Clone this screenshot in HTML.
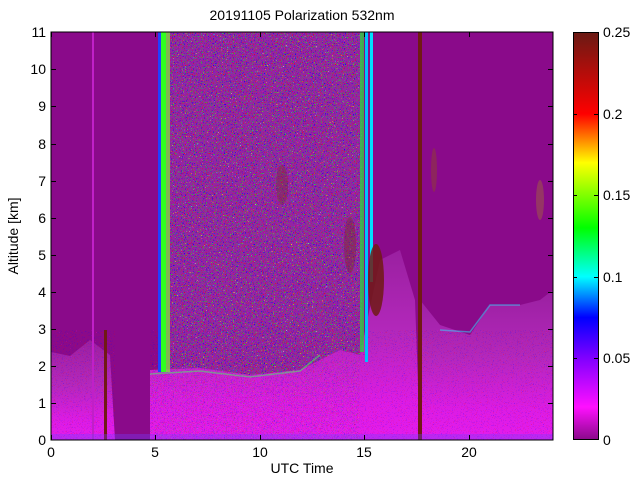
<!DOCTYPE html>
<html><head><style>
html,body{margin:0;padding:0;background:#fff;}
svg{display:block;font-family:"Liberation Sans",sans-serif;}
</style></head><body>
<svg width="640" height="480" viewBox="0 0 640 480" xmlns="http://www.w3.org/2000/svg">
<defs>
<filter id="nz" x="0" y="0" width="100%" height="100%">
<feTurbulence type="fractalNoise" baseFrequency="0.9" numOctaves="1" seed="3"/>
<feComponentTransfer>
<feFuncR type="discrete" tableValues="0 0 1"/>
<feFuncG type="discrete" tableValues="0 0 1"/>
<feFuncB type="discrete" tableValues="0 0 1"/>
<feFuncA type="linear" slope="0" intercept="1"/>
</feComponentTransfer>
<feColorMatrix type="matrix" values="1 0 0 0 0  0 1 0 0 0  0 0 1 0 0  1 1 1 0 0"/>
</filter>
<filter id="nz2" x="0" y="0" width="100%" height="100%">
<feTurbulence type="fractalNoise" baseFrequency="0.9" numOctaves="1" seed="9"/>
<feComponentTransfer>
<feFuncR type="discrete" tableValues="0 0 1"/>
<feFuncG type="discrete" tableValues="0 0 0 0"/>
<feFuncB type="discrete" tableValues="0 0 1"/>
<feFuncA type="linear" slope="0" intercept="1"/>
</feComponentTransfer>
<feColorMatrix type="matrix" values="1 0 0 0 0  0 0 0 0 0  0 0 1 0 0  0.5 0 0.5 0 0"/>
</filter>
<linearGradient id="bl" x1="0" y1="0" x2="0" y2="1">
<stop offset="0" stop-color="#9a20a0"/>
<stop offset="0.45" stop-color="#b428bc"/>
<stop offset="0.8" stop-color="#dc1ce4"/>
<stop offset="1" stop-color="#e41cec"/>
</linearGradient>
<linearGradient id="cb" x1="0" y1="1" x2="0" y2="0">
<stop offset="0" stop-color="#8a0a8a"/>
<stop offset="0.08" stop-color="#ff10ff"/>
<stop offset="0.2" stop-color="#8000ff"/>
<stop offset="0.3" stop-color="#0000ff"/>
<stop offset="0.4" stop-color="#00ffff"/>
<stop offset="0.52" stop-color="#00ff00"/>
<stop offset="0.68" stop-color="#ffff00"/>
<stop offset="0.8" stop-color="#ff0000"/>
<stop offset="1" stop-color="#6a1a14"/>
</linearGradient>
<clipPath id="pc"><rect x="51" y="32" width="502" height="408"/></clipPath>
</defs>
<text x="302" y="20" font-size="14" text-anchor="middle">20191105 Polarization 532nm</text>
<g clip-path="url(#pc)">
<rect x="51" y="32" width="502" height="408" fill="#8a0a8a"/>
<rect x="170" y="32" width="192" height="345" fill="#9424a4"/>
<rect x="170" y="32" width="192" height="345" filter="url(#nz)" opacity="0.75"/>
<polygon points="51,352 70,356 90,340 110,355 115,440 51,440" fill="url(#bl)"/>
<polygon points="150,370 200,368 250,375 300,370 340,350 360,355 380,260 400,250 415,300 420,440 150,440" fill="url(#bl)"/>
<polygon points="420,300 440,325 470,335 490,305 520,305 540,300 553,290 553,440 420,440" fill="url(#bl)"/>
<rect x="150" y="360" width="210" height="80" filter="url(#nz)" opacity="0.3"/>
<rect x="51" y="330" width="502" height="110" filter="url(#nz2)" opacity="0.5"/>
<rect x="115" y="32" width="35" height="408" fill="#8a0a8a"/>
<rect x="92" y="32" width="2" height="408" fill="#c020c8"/>
<rect x="158" y="32" width="3" height="340" fill="#2040ff"/>
<rect x="161" y="32" width="5" height="340" fill="#30ff20"/>
<rect x="166" y="32" width="4" height="340" fill="#80e040" opacity="0.8"/>
<rect x="360" y="32" width="4" height="320" fill="#30d040" opacity="0.8"/>
<rect x="365" y="32" width="3" height="330" fill="#00c0ff"/>
<rect x="370" y="32" width="3" height="250" fill="#00e0ff"/>
<rect x="104" y="330" width="3" height="110" fill="#701a14"/>
<rect x="418" y="32" width="4" height="408" fill="#701a14"/>
<ellipse cx="376" cy="280" rx="8" ry="36" fill="#701a14" opacity="0.85"/>
<ellipse cx="350" cy="245" rx="6" ry="28" fill="#7a2a30" opacity="0.45"/>
<ellipse cx="282" cy="185" rx="6" ry="20" fill="#7a2a30" opacity="0.4"/>
<ellipse cx="540" cy="200" rx="4" ry="20" fill="#a06040" opacity="0.5"/>
<ellipse cx="434" cy="170" rx="3" ry="22" fill="#904030" opacity="0.5"/>
<polyline points="150,374 200,371 250,377 300,371 320,355" fill="none" stroke="#40ff60" stroke-width="1.5" opacity="0.5"/>
<polyline points="440,330 470,332 490,305 520,305" fill="none" stroke="#30e0ff" stroke-width="1.5" opacity="0.5"/>
<rect x="51" y="434" width="502" height="6" fill="#7040ff" opacity="0.35"/>
</g>
<rect x="51" y="32" width="502" height="408" fill="none" stroke="#000" stroke-width="1"/>
<g stroke="#000" stroke-width="1">
<path d="M51.5,440v-5M155.5,440v-5M260.5,440v-5M364.5,440v-5M469.5,440v-5M51.5,32v5M155.5,32v5M260.5,32v5M364.5,32v5M469.5,32v5"/>
<path d="M51,403.5h5M51,366.5h5M51,329.5h5M51,292.5h5M51,255.5h5M51,218.5h5M51,181.5h5M51,144.5h5M51,106.5h5M51,69.5h5M553,403.5h-5M553,366.5h-5M553,329.5h-5M553,292.5h-5M553,255.5h-5M553,218.5h-5M553,181.5h-5M553,144.5h-5M553,106.5h-5M553,69.5h-5"/>
</g>
<g font-size="14" text-anchor="end">
<text x="46" y="445">0</text><text x="46" y="408">1</text><text x="46" y="371">2</text><text x="46" y="334">3</text><text x="46" y="297">4</text><text x="46" y="260">5</text><text x="46" y="223">6</text><text x="46" y="186">7</text><text x="46" y="149">8</text><text x="46" y="111">9</text><text x="46" y="74">10</text><text x="46" y="37">11</text>
</g>
<g font-size="14" text-anchor="middle">
<text x="51" y="457">0</text><text x="155" y="457">5</text><text x="260" y="457">10</text><text x="364" y="457">15</text><text x="469" y="457">20</text>
<text x="302" y="473">UTC Time</text>
</g>
<text transform="translate(18,236) rotate(-90)" font-size="14" text-anchor="middle">Altitude [km]</text>
<rect x="573.5" y="32.5" width="25" height="407" fill="url(#cb)" stroke="#000"/>
<g stroke="#000"><path d="M573,358.5h4M573,277.5h4M573,195.5h4M573,114.5h4M598,358.5h-4M598,277.5h-4M598,195.5h-4M598,114.5h-4"/></g>
<g font-size="14">
<text x="603" y="445">0</text><text x="603" y="363">0.05</text><text x="603" y="282">0.1</text><text x="603" y="200">0.15</text><text x="603" y="119">0.2</text><text x="603" y="37">0.25</text>
</g>
</svg>
</body></html>
